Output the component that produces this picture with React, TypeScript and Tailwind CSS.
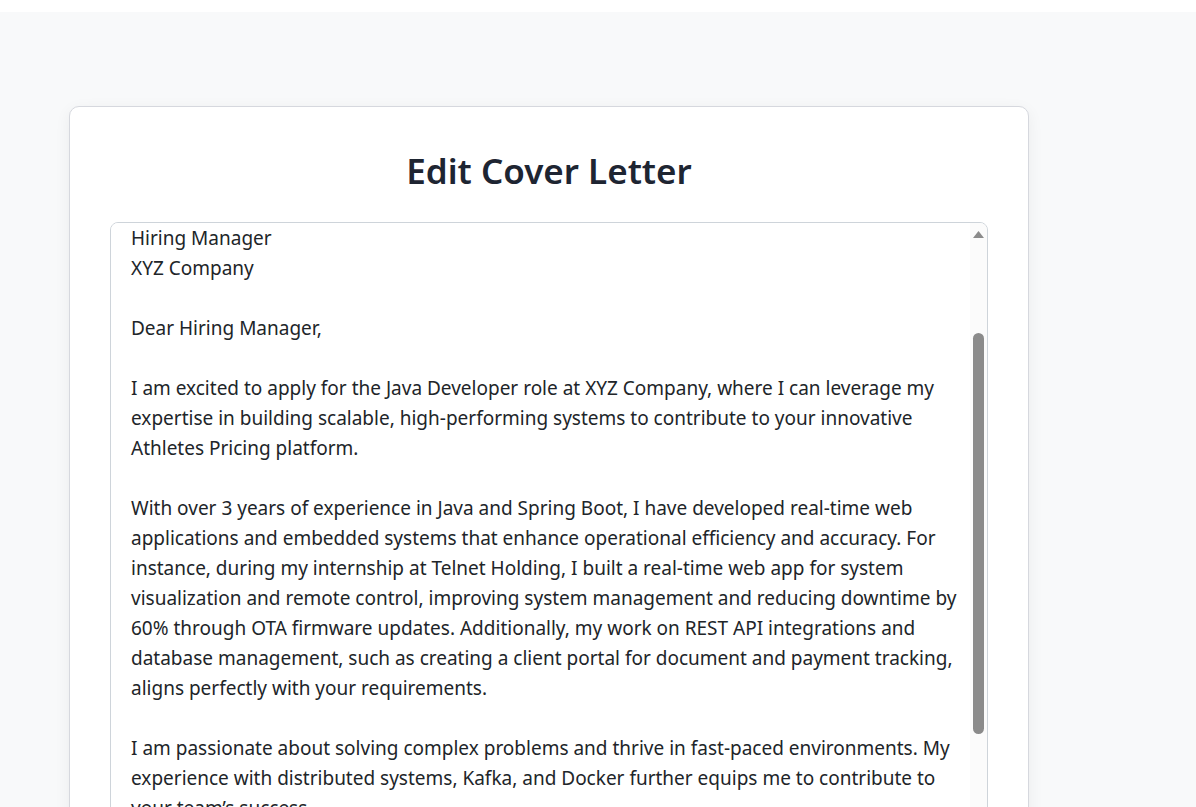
import { useEffect, useRef } from "react";

const letter = `[Your Name]
[Your Address]
[City, State, ZIP Code]
[Email Address] | [Phone Number]
[Date]

Hiring Manager
XYZ Company

Dear Hiring Manager,

I am excited to apply for the Java Developer role at XYZ Company, where I can leverage my expertise in building scalable, high-performing systems to contribute to your innovative Athletes Pricing platform.

With over 3 years of experience in Java and Spring Boot, I have developed real-time web applications and embedded systems that enhance operational efficiency and accuracy. For instance, during my internship at Telnet Holding, I built a real-time web app for system visualization and remote control, improving system management and reducing downtime by 60% through OTA firmware updates. Additionally, my work on REST API integrations and database management, such as creating a client portal for document and payment tracking, aligns perfectly with your requirements.

I am passionate about solving complex problems and thrive in fast-paced environments. My experience with distributed systems, Kafka, and Docker further equips me to contribute to your team’s success.

Some of my key qualifications include:
- Strong proficiency in Java, Spring Boot, Hibernate, and RESTful API design
- Hands-on experience with Kafka, Docker, and microservices architecture
- Solid understanding of SQL and NoSQL databases, including PostgreSQL and MongoDB
- Familiarity with CI/CD pipelines, Git, and Agile/Scrum methodologies
- Experience writing clean, testable code with JUnit and Mockito
- Knowledge of cloud platforms such as AWS and containerized deployments

Beyond my technical skills, I am a collaborative team player who values clear communication and continuous learning. I enjoy working closely with product managers, designers, and fellow engineers to translate business requirements into reliable software solutions, and I am always eager to learn new technologies that help deliver better results.

What excites me most about XYZ Company is your commitment to innovation and your focus on building data-driven products that make a real impact for athletes and organizations. I would love the opportunity to bring my problem-solving mindset and passion for high-quality software to your engineering team.

Thank you for considering my application. I would welcome the opportunity to discuss how my skills and experience align with your needs, and I look forward to the possibility of contributing to the continued success of XYZ Company.

Sincerely,
[Your Name]`;

function ScrollRail() {
  return (
    <div className="flex w-[17px] shrink-0 flex-col items-center bg-[#fbfbfb]">
      <div className="flex h-[17px] w-full items-end justify-center pb-[2px]">
        <svg width="11" height="7" viewBox="0 0 11 7">
          <path d="M5.5 0 L11 7 L0 7 Z" fill="#8b8b8b" />
        </svg>
      </div>
      <div className="mt-[93px] h-[401px] w-[11px] rounded-full bg-[#8b8b8b]" />
    </div>
  );
}

export default function App() {
  const ref = useRef<HTMLTextAreaElement>(null);

  // the editor is shown scrolled down to the recipient block
  useEffect(() => {
    if (ref.current) ref.current.scrollTop = 200;
  }, []);

  return (
    <div className="min-h-screen bg-[#f8f9fa] font-['Noto_Sans',sans-serif]">
      <div className="h-3 bg-white" />

      <div className="pt-[94px] pb-10">
        <div className="ml-[69px] w-[960px] rounded-[10px] border border-[#d6d8de] bg-white p-10 shadow-[0_4px_16px_rgba(0,0,0,0.06)]">
          <h1 className="mt-1 mb-[31px] text-center text-[35px] font-semibold leading-10 text-[#1e2532]">
            Edit Cover Letter
          </h1>

          <div className="flex h-[870px] overflow-hidden rounded-lg border border-[#ced4da] bg-white">
            <textarea
              ref={ref}
              defaultValue={letter}
              spellCheck={false}
              className="block min-w-0 flex-1 resize-none overflow-y-scroll bg-white py-5 pl-5 pr-2 text-[19px] leading-[30px] text-[#212529] outline-none [scrollbar-width:none]"
            />
            <ScrollRail />
          </div>
        </div>
      </div>
    </div>
  );
}
